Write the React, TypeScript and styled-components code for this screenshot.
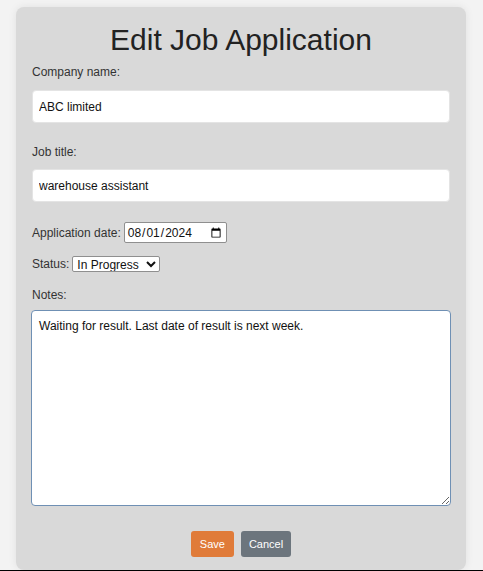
import styled, { createGlobalStyle } from "styled-components";

const GlobalStyle = createGlobalStyle`
  html, body {
    margin: 0;
    padding: 0;
    background: #f3f3f3;
    font-family: "Liberation Sans", Arial, sans-serif;
    color: #333;
  }
`;

const Page = styled.div`
  min-height: 571px;
  box-sizing: border-box;
  padding: 7px 17px 0 16px;
  border-bottom: 1px solid #000;
`;

const Card = styled.form`
  box-sizing: border-box;
  padding: 16px 16px 13px;
  background: #d9d9d9;
  border-radius: 8px;
  box-shadow: 0 0 8px rgba(0, 0, 0, 0.08);
`;

const Title = styled.h1`
  margin: 0 0 8px;
  font-size: 30px;
  font-weight: normal;
  line-height: 34px;
  text-align: center;
  color: #222;
`;

const Label = styled.label<{ $bottom?: number }>`
  display: block;
  font-size: 12px;
  line-height: 14px;
  margin-bottom: ${({ $bottom }) => $bottom ?? 10}px;
`;

const TextInput = styled.input<{ $bottom: number }>`
  display: block;
  width: 100%;
  height: 33px;
  box-sizing: border-box;
  margin: 0 0 ${({ $bottom }) => $bottom}px;
  padding: 0 6px;
  border: 1px solid #e4e4e4;
  border-radius: 4px;
  background: #fff;
  font-family: "Liberation Sans", Arial, sans-serif;
  font-size: 12px;
  color: #111;
  outline: none;
`;

const InlineRow = styled.div<{ $gap: number }>`
  display: flex;
  align-items: center;
  gap: 3px;
  margin-bottom: ${({ $gap }) => $gap}px;
  font-size: 12px;
`;

const DateInput = styled.input`
  width: 103px;
  height: 21px;
  box-sizing: border-box;
  padding: 0 2px;
  border: 1px solid #8f8f8f;
  border-radius: 2px;
  background: #fff;
  font-family: "Liberation Sans", Arial, sans-serif;
  font-size: 12px;
  color: #111;
`;

const Select = styled.select`
  width: 88px;
  height: 16px;
  box-sizing: border-box;
  padding: 0;
  border: 1px solid #8f8f8f;
  border-radius: 2px;
  background: #fff;
  font-family: "Liberation Sans", Arial, sans-serif;
  font-size: 12px;
  color: #111;
`;

const Notes = styled.textarea`
  display: block;
  width: calc(100% + 2px);
  height: 196px;
  box-sizing: border-box;
  margin: 0 -1px 25px;
  padding: 8px 7px;
  border: 1px solid #6f90b4;
  border-radius: 4px;
  background: #fff;
  font-family: "Liberation Sans", Arial, sans-serif;
  font-size: 12px;
  line-height: 14px;
  color: #111;
  outline: none;
`;

const Actions = styled.div`
  display: flex;
  justify-content: center;
  gap: 7px;
`;

const Button = styled.button<{ $variant: "save" | "cancel" }>`
  height: 26px;
  padding: 0 ${({ $variant }) => ($variant === "save" ? 9 : 8)}px;
  border: none;
  border-radius: 3px;
  background: ${({ $variant }) => ($variant === "save" ? "#e07b39" : "#6c757d")};
  color: #fff;
  font-family: "Liberation Sans", Arial, sans-serif;
  font-size: 11px;
  cursor: pointer;
`;

export default function App() {
  return (
    <>
      <GlobalStyle />
      <Page>
        <Card onSubmit={(e) => e.preventDefault()}>
          <Title>Edit Job Application</Title>

          <Label htmlFor="company" $bottom={11}>
            Company name:
          </Label>
          <TextInput id="company" $bottom={22} defaultValue="ABC limited" />

          <Label htmlFor="title">Job title:</Label>
          <TextInput id="title" $bottom={20} defaultValue="warehouse assistant" />

          <InlineRow $gap={13}>
            <span>Application date:</span>
            <DateInput type="date" defaultValue="2024-08-01" />
          </InlineRow>

          <InlineRow $gap={16}>
            <span>Status:</span>
            <Select defaultValue="In Progress">
              <option>Applied</option>
              <option>In Progress</option>
              <option>Interview</option>
              <option>Offer</option>
              <option>Rejected</option>
            </Select>
          </InlineRow>

          <Label htmlFor="notes" $bottom={8}>
            Notes:
          </Label>
          <Notes
            id="notes"
            defaultValue="Waiting for result. Last date of result is next week."
          />

          <Actions>
            <Button type="submit" $variant="save">
              Save
            </Button>
            <Button type="button" $variant="cancel">
              Cancel
            </Button>
          </Actions>
        </Card>
      </Page>
    </>
  );
}
